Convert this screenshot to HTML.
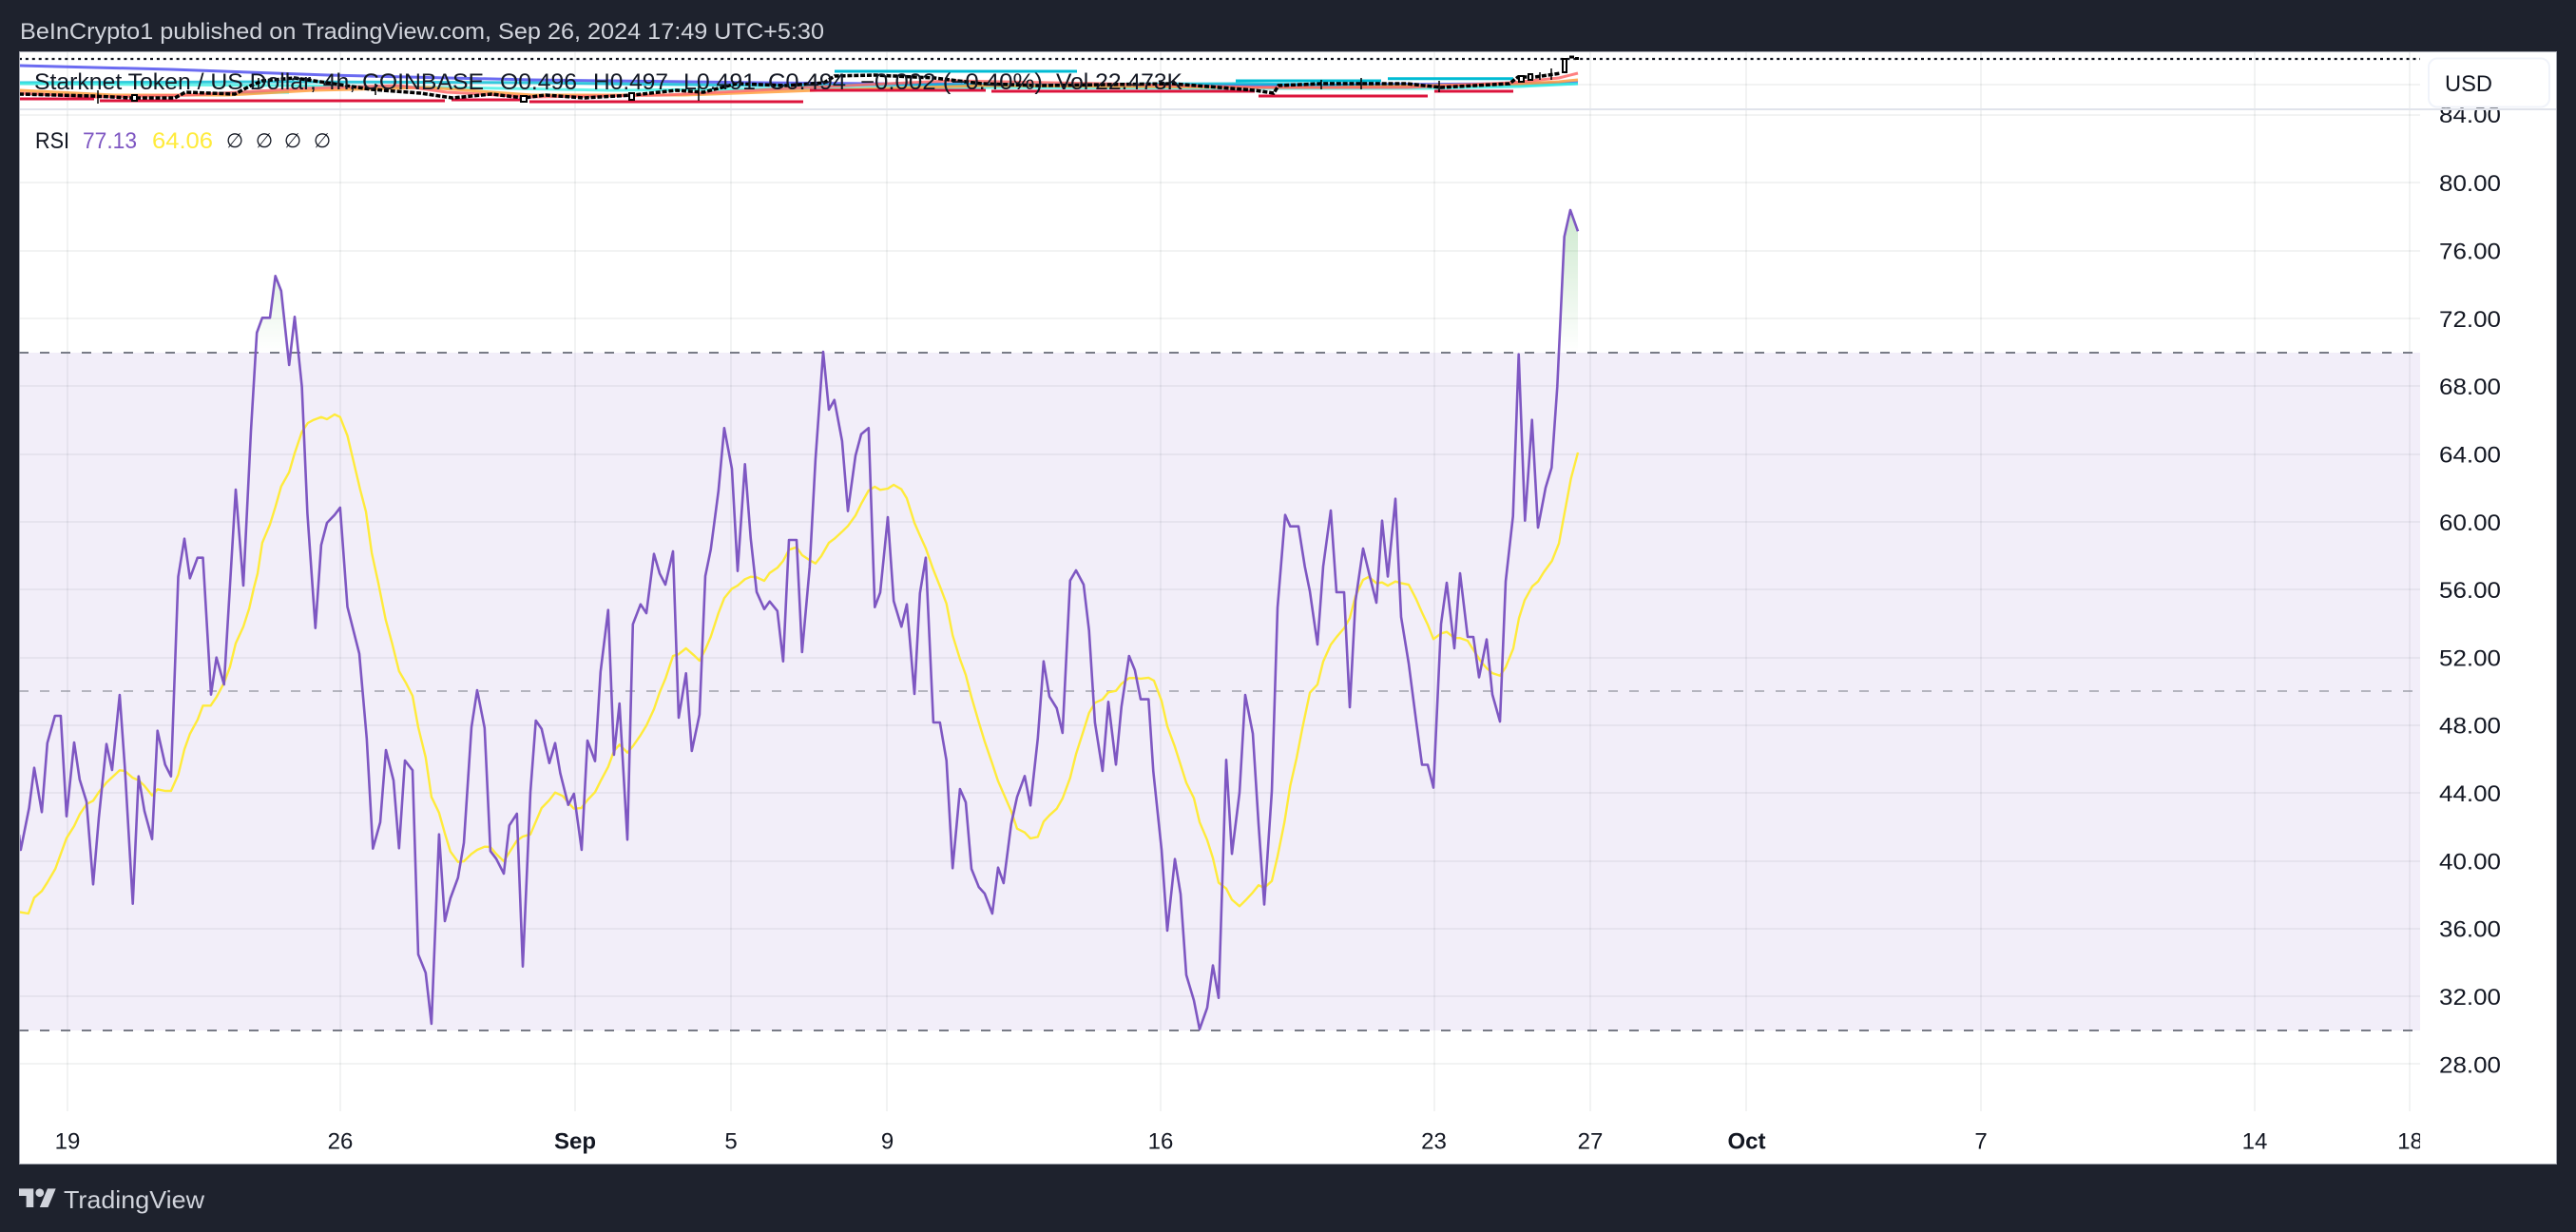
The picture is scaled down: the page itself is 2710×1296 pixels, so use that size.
<!DOCTYPE html>
<html lang="en">
<head>
<meta charset="utf-8">
<title>Starknet Token RSI chart</title>
<style>
html,body{margin:0;padding:0;width:2710px;height:1296px;overflow:hidden;background:#1e222d}
svg{display:block}
text{font-family:"Liberation Sans",Arial,sans-serif;font-size:24px;fill:#131722}
</style>
</head>
<body>
<svg xmlns="http://www.w3.org/2000/svg" width="2710" height="1296" viewBox="0 0 2710 1296">
<defs>
<clipPath id="top"><rect x="21" y="55" width="2525" height="59"/></clipPath>
<clipPath id="plot"><rect x="21" y="116" width="2525" height="1053"/></clipPath>
<clipPath id="timeaxis"><rect x="21" y="1170" width="2525" height="54"/></clipPath>
<linearGradient id="ob" gradientUnits="userSpaceOnUse" x1="0" y1="221" x2="0" y2="371">
<stop offset="0" stop-color="#4caf50" stop-opacity=".28"/>
<stop offset="1" stop-color="#4caf50" stop-opacity="0"/>
</linearGradient>
</defs>

<rect width="2710" height="1296" fill="#1e222d"/>
<text x="21" y="41" textLength="846" lengthAdjust="spacingAndGlyphs" style="fill:#d1d4dc">BeInCrypto1 published on TradingView.com, Sep 26, 2024 17:49 UTC+5:30</text>

<rect x="20.5" y="54.5" width="2669" height="1170" fill="#fff" stroke="#a3a6af" stroke-width="1"/>

<!-- grid -->
<g stroke="#2a2e39" stroke-opacity=".06" stroke-width="2">
<path d="M71 55V1169M358 55V1169M605 55V1169M769 55V1169M933 55V1169M1221 55V1169M1509 55V1169M1673 55V1169M1837 55V1169M2084 55V1169M2372 55V1169M2535 55V1169"/>
<path d="M21 89H2546M21 121H2546M21 192H2546M21 264H2546M21 335H2546M21 406H2546M21 478H2546M21 549H2546M21 620H2546M21 692H2546M21 763H2546M21 834H2546M21 906H2546M21 977H2546M21 1048H2546M21 1119H2546"/>
</g>

<!-- top pane overlays -->
<g clip-path="url(#top)" fill="none">
<path d="M20 62H2546" stroke="#131722" stroke-width="2.2" stroke-dasharray="3 3.9"/>
<polyline points="20,69 180,73 345,79 560,84 800,87 1040,89 1240,90 1450,89 1600,88 1660,87" stroke="#5b5bf0" stroke-width="3" opacity=".9"/>
<polyline points="20,87 300,86 560,87 800,90 1000,89 1300,88 1450,90 1600,90 1660,88" stroke="#00bcd4" stroke-width="3" opacity=".8"/>
<polyline points="20,88 304,90 470,92 640,95 850,93 1050,92 1300,93 1500,93 1600,91 1660,88" stroke="#40f0e4" stroke-width="3" opacity=".8"/>
<polyline points="230,98 304,97" stroke="#40f0e4" stroke-width="3"/>
<polyline points="20,95 120,100 240,100 330,95 450,92 560,100 720,100 860,95 1040,90 1300,92 1400,92 1500,90 1600,88 1640,86 1660,84" stroke="#ffa040" stroke-width="3" opacity=".85"/>
<polyline points="20,98 100,102 200,100 320,93 420,90 470,97 560,102 700,100 850,92 1000,85 1160,88 1320,92 1480,92 1590,87 1640,82 1660,77" stroke="#ff6a6a" stroke-width="3" opacity=".85"/>
<g stroke="#00bcd4" stroke-width="3">
<path d="M878 75H1133M1300 85H1453M1460 82.7H1592"/>
</g>
<g stroke="#dc143c" stroke-width="3">
<path d="M20 104H99M105 106H468M475 105H550M557 107H845M852 95H1037M1043 96H1320M1324 101H1502M1509 96H1592"/>
</g>
<polyline points="20,99 98,101 138,103 184,103 195,97 247,99 264,90 276,85 310,82 344,87 390,94 442,98 476,103 517,99 551,103 574,100 614,103 666,100 712,95 740,97 775,88 827,90 867,87 878,80 920,79 983,82 1033,88 1093,90 1233,88 1320,95 1340,98 1345,90 1390,88 1480,88 1516,92 1588,88 1597,81 1615,81 1642,77" stroke="#000" stroke-width="3.5" stroke-dasharray="5 1.84"/>
<g stroke="#000" stroke-width="1.5">
<path d="M103 95V109M272 82V93M395 88V100M735 90V106M1390 84V94M1432 82V94M1514 85V97M1632 72V84M1620 76V84"/>
</g>
<g stroke="#000" stroke-width="2" fill="#fff">
<rect x="139" y="100" width="5" height="6"/><rect x="548" y="101" width="6" height="6"/><rect x="662" y="98" width="5" height="7"/><rect x="1598" y="80" width="5" height="6"/><rect x="1644" y="62" width="4" height="14"/><rect x="1608" y="78" width="4" height="6"/>
</g>
<path d="M1651 60H1656M1657 61.5H1661" stroke="#000" stroke-width="3"/>
</g>

<!-- RSI band -->
<rect x="21" y="371" width="2525" height="713" fill="#7e57c2" fill-opacity=".1"/>
<g fill="url(#ob)">
<polygon points="268.5,371 270.2,350 275.9,334.3 284,334.3 289.7,290.3 295.8,306 302.2,371"/>
<polygon points="306.3,371 310,333.3 313.3,371"/>
<polygon points="1642.5,371 1645.7,249 1652,221 1660,243.3 1660,371"/>
</g>
<g fill="none" stroke="#787b86" stroke-width="2" stroke-dasharray="10 12">
<path d="M20 371H2546"/>
<path d="M20 727H2546" stroke-opacity=".5"/>
<path d="M20 1084H2546"/>
</g>

<g clip-path="url(#plot)" fill="none" stroke-linejoin="round">
<polyline stroke="#ffeb3b" stroke-width="2.4" points="20,959.3 29.9,961 36,944.3 44,937.3 49.8,928.3 58.2,914 63.9,898.3 70,881.7 78,869 83.8,856.7 91,846 98,842.3 104,833.3 112,823.3 117.9,817.7 125.9,810.3 131.3,811 139.7,818.3 145.8,820.7 152,826.7 160,836.7 165.7,830.3 173.7,832 179.9,832 187.5,815 194,788.3 199.8,772 207.8,757.3 213.5,742.3 221.6,742.3 227.7,733.3 235.7,718.3 241.9,701.7 248,676.7 256,659.3 262.2,640 267.1,618.3 271,603.3 275.9,571 284,551.7 289.7,533.3 295.8,511.7 304.2,496.7 310,476.7 317.6,454.3 323.8,445 329.9,441.7 337.9,438.7 344,441 352,436 357.8,438.7 365.5,458.3 373,490 378.9,515 385,538.3 391.1,581.7 398,613.3 405.7,651.7 412.5,676.7 419.8,706 427,718.3 434,732 440,765 447.8,796.7 453.9,838.3 461.9,855 468,876.7 473.8,895.7 481.8,906.7 488,906 496,898.3 502,894 509.8,890.7 515.9,891 522,898.3 530,906 535.8,896.7 543.8,884.3 550,880 558,877.7 563.7,864.3 569.8,850 577.9,841.7 584,833.7 592,837.3 600,846.7 603.8,850.7 611.5,850 618,841.7 626,833.3 631.8,821.7 639.8,806.7 645.9,790 651.7,783.3 660,791.7 665.8,785 673.9,773.3 680,763.3 688,746 694,728.3 700.3,713.3 708,690 713.7,688.3 721.7,682 730,689.3 735.9,695 742,683.3 747.7,670 755.8,645 761.9,629.3 770,619.3 776,616 783.7,609.3 789.8,606.7 796,607.3 804,611 809.7,602.7 817.8,597.3 823.9,590 830,578.3 838,575.7 843.8,584 851.8,589.3 857.9,592.7 864,585 872,571 877.8,566.7 885.9,559.3 892,553.3 900,542.3 906,530 913.8,516 920.3,512 926,515.3 934,514 940.2,510 948.3,514.7 954,524.3 962,550 967.8,563.3 973.9,576.7 981.5,598.3 988.8,616.7 995.7,635 1002.2,668.3 1009.9,693.3 1016,710 1022,733.3 1029.8,760 1035.9,780 1043.9,803.3 1050,821.7 1055.8,835 1063.8,853.3 1070,871.7 1078,875.7 1084,882 1091.8,880.3 1097.9,864.3 1104,857.7 1111.7,850.7 1117.8,840 1125.8,818.3 1132,793.3 1140,768.3 1145.7,750 1151.9,739.3 1159.9,735.7 1166,728.3 1174,726.7 1179.8,719.3 1187.8,713.3 1194,713.2 1200,713.9 1208.3,712.9 1214,716 1222,737.3 1228,763.9 1236,785.6 1242,804.5 1248,823.4 1256,839.6 1262,864.8 1270,883.7 1276,902.6 1282,928.5 1290,934.7 1296,946.4 1304,953.3 1310,947.4 1318,938.8 1324,931.2 1330,934 1338,926.7 1344,900.9 1351.3,864.8 1357.3,826.9 1364,797.6 1370,766.6 1378,728.7 1386,720.1 1392,696 1400,678.1 1406,670.2 1414,660.9 1420,650.2 1426,627.1 1434,609.9 1440,606.8 1448,613.4 1454,612.7 1460,616.1 1468,611.7 1474,613.4 1482,615.1 1490,630.6 1496,644.4 1502,657.1 1508,672.3 1516,666.4 1522,664.7 1530,671.2 1536,671.2 1544,674 1552,686.7 1558,696 1564,702.9 1570,708.1 1578,710.8 1584,701.9 1592,682.2 1598,650.2 1604,631.3 1612,616.8 1618,611.7 1624,602 1632.7,590 1640,571.7 1644,550 1652.7,503.3 1660,476"/>
<polyline stroke="#7e57c2" stroke-width="2.6" points="20,878 21.8,894 30.6,850 36,807.7 44,854.3 49.8,781.7 57.8,753 63.9,753 70,858.7 78,781 83.8,820 91,843.3 98,930.3 104,860 112,782.7 117.9,810 125.9,731 131.3,806.7 139.7,950.7 145.8,816.7 152,853.3 160,882.7 165.7,768.7 173.7,804.3 179.9,816.7 187.5,606.7 194,566.7 199.8,608.3 207.8,586.7 213.5,586.7 222,730.7 227.7,691.7 235.7,720 248,515 256,616 264,453.3 270.2,350 275.9,334.3 284,334.3 289.7,290.3 295.8,306 304.2,384 310,333.3 317.6,406.7 323.4,540 331.8,660.7 337.9,573.3 344,550 352,541.7 357.8,534 365.5,638.3 378,687.7 385.8,776.7 392.3,892.7 400,865 406,789 414,821 419.8,892.3 426,800 434,810.3 440,1004 447.8,1023.3 453.9,1077 461.9,877.7 468,969 473.8,945 481.8,923.3 488,886.7 496,765 502,726 509.8,765.7 515.9,895.3 522,903.3 530,919 535.8,868.3 543.8,856 550,1016.7 558,833.3 563.7,758 569.8,766.7 577.9,802.7 584,781.7 589.4,813.3 597.8,846.7 603.8,835 611.9,894 618,779 626,800.7 631.8,706.7 639.8,641.7 645.9,794 651.7,740 660,883.3 665.8,656.7 673.9,635.7 680,645 688,582.7 694,603.3 700,615 708,580 714,755 721.7,708.3 727.8,790 735.9,751.7 742,606 747.7,578.3 755.8,516.7 761.9,450.3 770,493.3 776,600.7 783.7,488.3 789.8,566.7 796,622.7 804,640.7 809.7,632.7 817.8,642.7 823.9,695.7 830,568 838,568 843.8,686 851.8,596.7 857.9,483.3 866,370 872,431 877.8,420.7 885.9,464 892,537.7 900,479.3 906,456.7 913.8,450.3 920.3,638.7 926,623.3 934,544 940.2,632.3 948.3,659.3 954,635.7 962,730 967.8,624 973.9,586.7 981.9,760 988.8,760 995.7,800 1002.2,913.3 1009.9,830 1016,844 1022,914 1029.8,933.3 1035.9,940 1043.9,961 1050,912.7 1055.8,929 1063.8,866.7 1070,838.3 1078,816.3 1084,847.3 1091.8,776.7 1097.9,695.7 1104,732.7 1111.7,745 1117.8,771 1125.8,610.7 1132,600 1140,615 1145.7,663.3 1151.9,760 1159.9,811 1166,738.3 1174,804.3 1179.8,743.3 1187.8,690 1193.9,705 1200,735.6 1208.3,735.6 1213.3,811.4 1222,894 1228,979 1236,903.7 1242,940.5 1248,1025.6 1256,1052.4 1262,1082.7 1270,1060 1276,1015.6 1282,1049.7 1290,799.3 1296,898.2 1304,833.8 1310,731.1 1318,771.8 1324,866.5 1330,951.5 1338,832 1344,639.2 1352,541.7 1357.3,553.7 1366,553.7 1372.7,596 1378,622 1386,678 1392,596 1400,537 1406,623 1414,623 1420,744 1426,632 1434,577 1440.7,604.8 1448,634 1454,547.7 1460,606.5 1468,524.7 1474,649 1482,698 1490,760 1496,804.5 1502,804.5 1508,828.6 1516,656.4 1522,613 1530,682 1536,603 1544,670 1550,670 1556,712.5 1564,672.6 1570,730.5 1578,759 1584,611.7 1591.7,543 1597.7,372.7 1604.3,547.7 1611.7,441.7 1618,555 1626,513 1632.3,492 1638.3,406.7 1645.7,249 1652,221 1660,243.3"/>
</g>

<!-- price axis labels -->
<g>
<text x="2566" y="129" textLength="65" lengthAdjust="spacingAndGlyphs">84.00</text>
<text x="2566" y="201" textLength="65" lengthAdjust="spacingAndGlyphs">80.00</text>
<text x="2566" y="272.5" textLength="65" lengthAdjust="spacingAndGlyphs">76.00</text>
<text x="2566" y="343.8" textLength="65" lengthAdjust="spacingAndGlyphs">72.00</text>
<text x="2566" y="415.2" textLength="65" lengthAdjust="spacingAndGlyphs">68.00</text>
<text x="2566" y="486.5" textLength="65" lengthAdjust="spacingAndGlyphs">64.00</text>
<text x="2566" y="557.8" textLength="65" lengthAdjust="spacingAndGlyphs">60.00</text>
<text x="2566" y="629.1" textLength="65" lengthAdjust="spacingAndGlyphs">56.00</text>
<text x="2566" y="700.4" textLength="65" lengthAdjust="spacingAndGlyphs">52.00</text>
<text x="2566" y="771.7" textLength="65" lengthAdjust="spacingAndGlyphs">48.00</text>
<text x="2566" y="843.1" textLength="65" lengthAdjust="spacingAndGlyphs">44.00</text>
<text x="2566" y="914.4" textLength="65" lengthAdjust="spacingAndGlyphs">40.00</text>
<text x="2566" y="985.7" textLength="65" lengthAdjust="spacingAndGlyphs">36.00</text>
<text x="2566" y="1057" textLength="65" lengthAdjust="spacingAndGlyphs">32.00</text>
<text x="2566" y="1128.3" textLength="65" lengthAdjust="spacingAndGlyphs">28.00</text>
</g>

<!-- pane separator and currency box -->
<rect x="21" y="114" width="2668" height="2" fill="#e0e3eb"/>
<rect x="2555" y="61.5" width="127" height="51" rx="9" fill="#fff" stroke="#f0f3fa" stroke-width="2"/>
<text x="2572" y="96" textLength="50" lengthAdjust="spacingAndGlyphs">USD</text>

<!-- legends -->
<text x="36" y="94" textLength="473" lengthAdjust="spacingAndGlyphs">Starknet Token / US Dollar, 4h, COINBASE</text>
<text x="526" y="94" textLength="81" lengthAdjust="spacingAndGlyphs">O0.496</text>
<text x="624" y="94" textLength="79" lengthAdjust="spacingAndGlyphs">H0.497</text>
<text x="719" y="94" textLength="76" lengthAdjust="spacingAndGlyphs">L0.491</text>
<text x="808" y="94" textLength="82" lengthAdjust="spacingAndGlyphs">C0.494</text>
<text x="905" y="94" textLength="192" lengthAdjust="spacingAndGlyphs">−0.002 (−0.40%)</text>
<text x="1111" y="94" textLength="133" lengthAdjust="spacingAndGlyphs">Vol 22.473K</text>

<text x="37" y="156" textLength="36" lengthAdjust="spacingAndGlyphs">RSI</text>
<text x="87" y="156" textLength="57" lengthAdjust="spacingAndGlyphs" style="fill:#7e57c2">77.13</text>
<text x="160" y="156" textLength="64" lengthAdjust="spacingAndGlyphs" style="fill:#ffeb3b">64.06</text>
<g text-anchor="middle">
<text x="247" y="155" style="font-size:21px;font-family:'DejaVu Sans',sans-serif">∅</text>
<text x="278" y="155" style="font-size:21px;font-family:'DejaVu Sans',sans-serif">∅</text>
<text x="308" y="155" style="font-size:21px;font-family:'DejaVu Sans',sans-serif">∅</text>
<text x="339" y="155" style="font-size:21px;font-family:'DejaVu Sans',sans-serif">∅</text>
</g>

<!-- time axis -->
<g clip-path="url(#timeaxis)" text-anchor="middle">
<text x="71" y="1208.5">19</text>
<text x="358" y="1208.5">26</text>
<text x="605" y="1208.5" font-weight="700">Sep</text>
<text x="769" y="1208.5">5</text>
<text x="933.5" y="1208.5">9</text>
<text x="1221" y="1208.5">16</text>
<text x="1508.5" y="1208.5">23</text>
<text x="1673" y="1208.5">27</text>
<text x="1837.5" y="1208.5" font-weight="700">Oct</text>
<text x="2084" y="1208.5">7</text>
<text x="2372" y="1208.5">14</text>
<text x="2535.5" y="1208.5">18</text>
</g>

<!-- TradingView logo -->
<g transform="translate(20,1246) scale(1.09)" fill="#d1d4dc">
<path d="M14 22H7V11H0V4h14v18zM28 22h-8l7.5-18h8L28 22z"/>
<circle cx="20" cy="8" r="4"/>
</g>
<text x="67" y="1271" textLength="148" lengthAdjust="spacingAndGlyphs" style="font-size:26px;fill:#d1d4dc">TradingView</text>
</svg>
</body>
</html>
